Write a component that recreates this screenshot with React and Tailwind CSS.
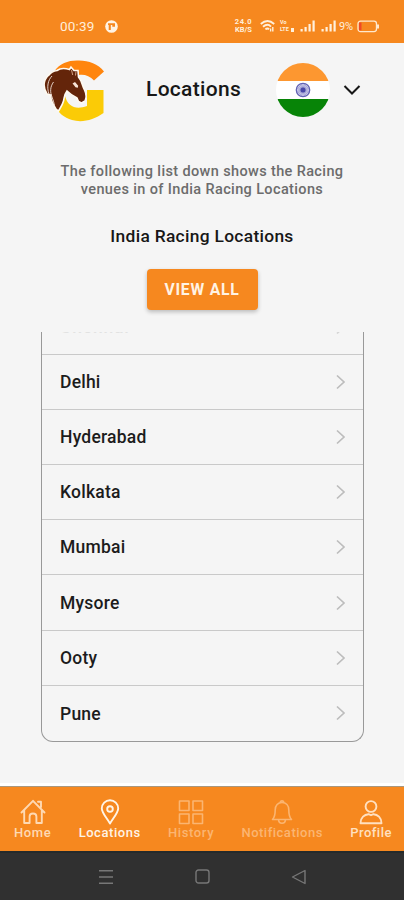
import React from "react";

const cities = ["Chennai", "Delhi", "Hyderabad", "Kolkata", "Mumbai", "Mysore", "Ooty", "Pune"];

function Signal() {
  return (
    <svg width="16" height="12" viewBox="0 0 16 12" fill="#fff0dc">
      <rect x="0.5" y="9" width="2.2" height="2.5" />
      <rect x="4.5" y="7" width="2.2" height="4.5" />
      <rect x="8.5" y="4" width="2.2" height="7.5" />
      <rect x="12.5" y="0.5" width="2.2" height="11" />
    </svg>
  );
}

function StatusBar() {
  return (
    <div className="flex h-[43px] shrink-0 items-start bg-[#f6881f] pl-[60px] pt-[18px] text-[#ffeedb]">
      <span className="w-[36px] whitespace-nowrap text-[13.5px] leading-[17px] tracking-[0.2px]">00:39</span>
      <svg className="ml-[9px] mt-[2px]" width="13" height="13" viewBox="0 0 13 13">
        <circle cx="6.5" cy="6.5" r="6.3" fill="#fff3e4" />
        <path d="M3 3.2h7v3.6H7.3V5H5.8v5H3.7V5H3z" fill="#f6881f" />
      </svg>
      <div className="ml-[115px] flex w-[21px] flex-col items-center text-[7.5px] font-bold">
        <span className="h-[8px] leading-[8px] tracking-[0.6px]">24.0</span>
        <span className="h-[8px] leading-[8px]">KB/S</span>
      </div>
      <svg className="ml-[6px] mt-[2px]" width="15" height="12" viewBox="0 0 15 12" fill="none" stroke="#fff0dc" strokeWidth="1.9">
        <path d="M0.8 4Q7.5-1.8 14.2 4M3 6.8Q7.5 2.8 11 6.6M5.4 9.4Q7.5 7.6 9 9.4" />
        <path d="M12.8 7v4.5M10.6 8.5v3" strokeWidth="1.4" />
      </svg>
      <div className="ml-[5px] mt-[1px] flex w-[15px] items-end font-bold">
        <span className="flex w-[10px] shrink-0 flex-col text-[5.5px]">
          <span className="h-[7px] leading-[7px]">Vo</span>
          <span className="h-[7px] leading-[7px]">LTE</span>
        </span>
        <span className="mb-[1px] ml-[1px] h-[4px] w-[3px] bg-[#fff0dc]" />
      </div>
      <div className="ml-[5px] mt-[2px]"><Signal /></div>
      <div className="ml-[5px] mt-[2px]"><Signal /></div>
      <span className="ml-[2px] w-[15px] whitespace-nowrap text-[11px] leading-[17px] tracking-[-0.2px]">9%</span>
      <svg className="ml-[3px] mt-[2px]" width="23" height="13" viewBox="0 0 23 13" fill="none">
        <rect x="1" y="1.2" width="18.5" height="10.4" rx="2.5" stroke="#ffe8cd" strokeWidth="1.3" />
        <rect x="2" y="2.5" width="2.5" height="7.8" fill="#f04a25" />
        <path d="M21 4.5v4" stroke="#ffe8cd" strokeWidth="2" />
      </svg>
    </div>
  );
}

function Logo() {
  return (
    <svg width="64" height="64" viewBox="0 0 64 64">
      <path d="M10.5 13C16 5 25 2 35 2.5C45 2.5 54 6 60 13.5L50 22.5C46 18 40 16 35 17L22 30H8Z" fill="#ff850d" />
      <path d="M43 32H59.5V55C50 62 38 65 28 62C20 59.5 14 55 11.5 48L21 38C24 49 32 52 43 48Z" fill="#fbcb06" />
      <path
        d="M13 12.5C17 9.5 22 10.5 25.5 11.5L27 9L30 12.5L34 12.5L34.5 19C38 23 38 27 40.5 32C42.5 36 43 39 41 43L37.5 45L34.5 43.5L33 40C29 38 26 36 23 33C20 37 20.5 39 19.5 43C18.5 47 17 49 14.5 53L12 51C10 47 6 43 7 37L3 36C-2 28 0 21 5 17C7 14 10 13 13 12.5Z"
        fill="#64250a"
        stroke="#fffaf0"
        strokeWidth="1.6"
      />
      <path d="M8 18C4 22 2.5 29 5 36M9.5 24C6 29 6 34 8 39C9 42 10 44 10.5 48" fill="none" stroke="#f1e2da" strokeWidth="0.9" />
      <path d="M28.5 25.5l2.5-1.5 3.2 3.8-.4 2-2.3-.5-1.5-2z" fill="#f8e4d7" />
      <path d="M27.5 12l1.2 5M32 13.5l-.5 4" fill="none" stroke="#e0b090" strokeWidth="0.9" />
    </svg>
  );
}

function Flag() {
  const spokes = Array.from({ length: 12 }, (_, i) => i * 15);
  return (
    <svg width="54" height="54" viewBox="0 0 54 54">
      <clipPath id="disc"><circle cx="27" cy="27" r="27" /></clipPath>
      <g clipPath="url(#disc)">
        <rect width="54" height="18" fill="#fd9730" />
        <rect y="18" width="54" height="18" fill="#fff" />
        <rect y="36" width="54" height="18" fill="#078407" />
      </g>
      <circle cx="27" cy="27" r="6.7" fill="#e3e3f5" stroke="#6262b4" strokeWidth="1.3" />
      {spokes.map((a) => (
        <path key={a} d="M21 27H33" stroke="#7272be" strokeWidth="0.5" transform={`rotate(${a} 27 27)`} />
      ))}
      <circle cx="27" cy="27" r="2.5" fill="#4848a8" />
    </svg>
  );
}

function Row({ name, faded, last }) {
  return (
    <div className={`flex h-[55.2px] shrink-0 items-center justify-between pl-[18px] pr-[16px] ${last ? "" : "border-b border-[#c9c9c9]"}`}>
      <span className={`text-[17.5px] font-medium ${faded ? "pt-[1px] tracking-[0.8px] text-[#e2e2e2]" : "pt-[0.5px] tracking-[0.22px] text-[#1c1c1c]"}`}>{name}</span>
      <svg width="12" height="16" viewBox="0 0 12 16" fill="none" stroke={faded ? "#d5d5d5" : "#bdbdbd"} strokeWidth="1.7">
        <path d="M2 1.5L9 8L2 14.5" />
      </svg>
    </div>
  );
}

function Tab({ label, tone, tracking, children }) {
  return (
    <div className={`flex flex-col items-center ${tone}`}>
      <svg width="26" height="26" viewBox="0 0 26 26" fill="none" stroke="currentColor" strokeWidth="1.9" strokeLinejoin="round" strokeLinecap="round">
        {children}
      </svg>
      <span className={`whitespace-nowrap text-[13px] font-medium leading-[16px] ${tracking}`}>{label}</span>
    </div>
  );
}

export default function App() {
  return (
    <div className="flex h-[900px] w-[404px] flex-col overflow-hidden bg-[#f5f5f5] font-[Roboto,sans-serif]">
      <StatusBar />
      <header className="flex h-[94px] shrink-0 items-center pl-[44px]">
        <Logo />
        <h1 className="ml-[38px] w-[95px] whitespace-nowrap text-[21px] font-medium tracking-[0.3px] text-[#171717]">Locations</h1>
        <div className="ml-[35px]"><Flag /></div>
        <svg className="ml-[13px]" width="18" height="12" viewBox="0 0 18 12" fill="none" stroke="#171717" strokeWidth="2">
          <path d="M1.5 2L9 9.5L16.5 2" />
        </svg>
      </header>
      <section className="flex h-[195px] shrink-0 flex-col items-center pt-[26px]">
        <p className="text-center text-[14.5px] font-medium leading-[18px] tracking-[0.37px] text-[#6c6c6c]">
          The following list down shows the Racing
          <br />
          venues in of India Racing Locations
        </p>
        <h2 className="mt-[25px] text-[17.4px] font-medium leading-[24px] tracking-[0.3px] text-[#171717]">India Racing Locations</h2>
        <button className="mt-[21px] h-[41px] w-[111px] rounded-[4px] bg-[#f6881f] pt-[1px] text-[15.7px] font-bold tracking-[0.8px] text-[#fff3e4] shadow-[0_2px_4px_rgba(0,0,0,0.24)]">
          VIEW ALL
        </button>
      </section>
      <main className="ml-[41px] flex h-[410px] w-[323px] shrink-0 flex-col justify-end overflow-hidden rounded-b-[12px] border-x border-b border-[#999]">
        {cities.map((name, i) => (
          <Row key={name} name={name} faded={i === 0} last={i === cities.length - 1} />
        ))}
      </main>
      <div className="h-[41px] shrink-0" />
      <div className="h-[3px] shrink-0 bg-white" />
      <nav className="flex h-[65px] shrink-0 items-start justify-between border-t border-[#a8977f] bg-[#f6881f] pl-[14px] pr-[12px] pt-[12px]">
        <Tab label="Home" tone="text-[#fed9b3]" tracking="tracking-[0.6px]">
          <path d="M1.5 13.5L13 1.8L24.5 13.5M4.2 11V24H9.6V17.5C9.6 13.5 16.4 13.5 16.4 17.5V24H21.8V11M18 2.8H21V8" />
        </Tab>
        <Tab label="Locations" tone="text-[#fff4e6]" tracking="tracking-[0.55px]">
          <path d="M13 24.5C9 18 4.8 13.5 4.8 9.5A8.2 8.2 0 0 1 21.2 9.5C21.2 13.5 17 18 13 24.5Z" />
          <circle cx="13" cy="10" r="2.8" />
        </Tab>
        <Tab label="History" tone="text-[#fbb571]" tracking="tracking-[0.6px]">
          <path strokeWidth="1.6" d="M1.5 2H11V11.5H1.5ZM15 2H24.5V11.5H15ZM1.5 15H11V24.5H1.5ZM15 15H24.5V24.5H15Z" />
        </Tab>
        <Tab label="Notifications" tone="text-[#fbb571]" tracking="tracking-[0.5px]">
          <path strokeWidth="1.6" d="M3.5 20.5C6 18 6.2 16 6.2 11C6.2 6.5 9 3.5 13 3.5S19.8 6.5 19.8 11C19.8 16 20 18 22.5 20.5ZM11.3 3.5C11.3 1.2 14.7 1.2 14.7 3.5M9.5 20.5C9.8 25.5 16.2 25.5 16.5 20.5" />
        </Tab>
        <Tab label="Profile" tone="text-[#ffe0c0]" tracking="tracking-[0.5px]">
          <circle cx="13" cy="7.5" r="5.4" />
          <path d="M2.5 24.2C2.5 18.5 6.5 15.5 10.5 15.2L13 16.2L15.5 15.2C19.5 15.5 23.5 18.5 23.5 24.2Z" />
        </Tab>
      </nav>
      <footer className="flex h-[49px] shrink-0 items-center border-t-2 border-[#252a2b] bg-[#303030] pl-[98px] text-[#777]">
        <svg width="16" height="16" viewBox="0 0 16 16" fill="none" stroke="currentColor" strokeWidth="1.5">
          <path d="M1 1.8H15M1 8H15M1 14.2H15" />
        </svg>
        <svg className="ml-[81px]" width="15" height="15" viewBox="0 0 15 15" fill="none" stroke="currentColor" strokeWidth="1.4">
          <rect x="1" y="1" width="13" height="13" rx="2.5" />
        </svg>
        <svg className="ml-[81px]" width="16" height="16" viewBox="0 0 16 16" fill="none" stroke="currentColor" strokeWidth="1.4" strokeLinejoin="round">
          <path d="M1.5 8L14 1.5V14.5Z" />
        </svg>
      </footer>
    </div>
  );
}
